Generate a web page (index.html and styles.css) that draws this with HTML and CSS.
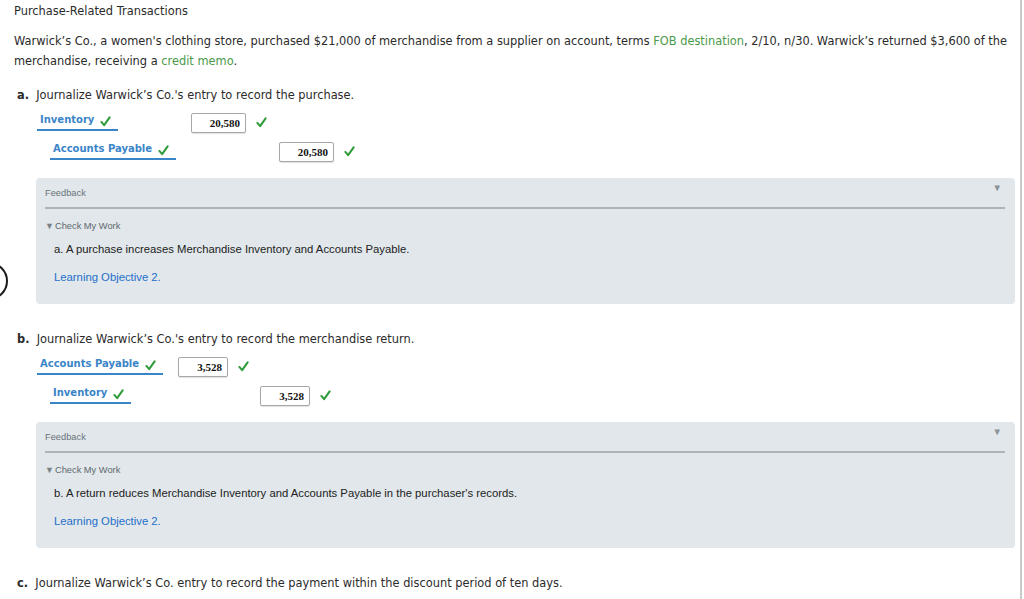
FILE: index.html
```html
<!DOCTYPE html>
<html>
<head>
<meta charset="utf-8">
<link rel="stylesheet" href="styles.css">
</head>
<body>
<div class="frame">
  <div class="ring"></div>
  <div class="page">
    <div class="title">Purchase-Related Transactions</div>
    <p class="intro">Warwick’s Co., a women's clothing store, purchased $21,000 of merchandise from a supplier on account, terms <span class="term">FOB destination</span>, 2/10, n/30. Warwick’s returned $3,600 of the merchandise, receiving a <span class="term">credit memo</span>.</p>

    <div class="question"><b>a.</b>&nbsp; Journalize Warwick’s Co.'s entry to record the purchase.</div>
    <div class="entry entry-a">
      <div class="row">
        <div class="label-cell"><span class="acct">Inventory<svg class="chk" viewBox="0 0 12 12"><path d="M1.5 6.5 L4.5 10 L10.5 1.5" /></svg></span></div>
        <div class="debit-cell"><span class="amt">20,580</span><svg class="chk" viewBox="0 0 12 12"><path d="M1.5 6.5 L4.5 10 L10.5 1.5" /></svg></div>
        <div class="credit-cell"></div>
      </div>
      <div class="row">
        <div class="label-cell indent"><span class="acct">Accounts Payable<svg class="chk" viewBox="0 0 12 12"><path d="M1.5 6.5 L4.5 10 L10.5 1.5" /></svg></span></div>
        <div class="debit-cell"></div>
        <div class="credit-cell"><span class="amt">20,580</span><svg class="chk" viewBox="0 0 12 12"><path d="M1.5 6.5 L4.5 10 L10.5 1.5" /></svg></div>
      </div>
    </div>

    <div class="feedback">
      <div class="fb-head"><span>Feedback</span><span class="fb-arrow">▼</span></div>
      <div class="fb-body">
        <div class="cmw"><span class="tri">▼</span>Check My Work</div>
        <div class="fb-text">a. A purchase increases Merchandise Inventory and Accounts Payable.</div>
        <div class="fb-link">Learning Objective 2.</div>
      </div>
    </div>

    <div class="question q-next"><b>b.</b>&nbsp; Journalize Warwick’s Co.'s entry to record the merchandise return.</div>
    <div class="entry entry-b">
      <div class="row">
        <div class="label-cell"><span class="acct">Accounts Payable<svg class="chk" viewBox="0 0 12 12"><path d="M1.5 6.5 L4.5 10 L10.5 1.5" /></svg></span></div>
        <div class="debit-cell"><span class="amt">3,528</span><svg class="chk" viewBox="0 0 12 12"><path d="M1.5 6.5 L4.5 10 L10.5 1.5" /></svg></div>
        <div class="credit-cell"></div>
      </div>
      <div class="row">
        <div class="label-cell indent"><span class="acct">Inventory<svg class="chk" viewBox="0 0 12 12"><path d="M1.5 6.5 L4.5 10 L10.5 1.5" /></svg></span></div>
        <div class="debit-cell"></div>
        <div class="credit-cell"><span class="amt">3,528</span><svg class="chk" viewBox="0 0 12 12"><path d="M1.5 6.5 L4.5 10 L10.5 1.5" /></svg></div>
      </div>
    </div>

    <div class="feedback">
      <div class="fb-head"><span>Feedback</span><span class="fb-arrow">▼</span></div>
      <div class="fb-body">
        <div class="cmw"><span class="tri">▼</span>Check My Work</div>
        <div class="fb-text">b. A return reduces Merchandise Inventory and Accounts Payable in the purchaser's records.</div>
        <div class="fb-link">Learning Objective 2.</div>
      </div>
    </div>

    <div class="question q-next"><b>c.</b>&nbsp; Journalize Warwick’s Co. entry to record the payment within the discount period of ten days.</div>
  </div>
</div>
</body>
</html>
```

FILE: styles.css
```css
html, body {
  margin: 0;
  padding: 0;
  background: #ffffff;
}
body {
  font-family: "DejaVu Sans", Verdana, sans-serif;
  font-size: 11.4px;
  color: #2b2b2b;
  overflow: hidden;
}
.frame {
  position: relative;
  width: 1020px;
  height: 599px;
  border-right: 2px solid #c9c9c9;
  overflow: hidden;
}
.ring {
  position: absolute;
  left: -30px;
  top: 262px;
  width: 34px;
  height: 34px;
  border: 2px solid #1a1a1a;
  border-radius: 50%;
}
.page {
  padding-left: 14px;
  padding-top: 1px;
}
.title {
  line-height: 20px;
  height: 20px;
}
.intro {
  margin: 10px 0 0 0;
  line-height: 20px;
  padding-right: 6px;
}
.term {
  color: #4a9a4a;
}
.question {
  margin-top: 14px;
  line-height: 20px;
  padding-left: 3px;
}
.question b {
  font-weight: bold;
}
.q-next {
  margin-top: 25px;
}
.entry {
  margin-top: 3px;
  padding-left: 23px;
}
.row {
  display: flex;
  align-items: center;
  height: 29px;
}
.label-cell {
  flex: none;
  margin-bottom: 2px;
}
.indent {
  padding-left: 13px;
}
.entry-a .label-cell { width: 154px; }
.entry-a .label-cell.indent { width: 141px; }
.entry-a .debit-cell { width: 88px; }
.entry-b .label-cell { width: 141px; }
.entry-b .label-cell.indent { width: 128px; }
.entry-b .debit-cell { width: 82px; }
.debit-cell, .credit-cell {
  flex: none;
  display: flex;
  align-items: center;
  height: 20px;
}
.acct {
  display: inline-flex;
  align-items: center;
  font-weight: bold;
  font-size: 10px;
  color: #3a84c8;
  padding: 0 7px 2px 3px;
  border-bottom: 2px solid #3a84c8;
  line-height: 14px;
}
.acct .chk {
  margin-left: 6px;
  margin-top: 2px;
}
.amt {
  box-sizing: border-box;
  display: inline-block;
  width: 55px;
  height: 20px;
  line-height: 18px;
  border: 1px solid #a8a8a8;
  border-radius: 2px;
  box-shadow: 0 1px 1px rgba(0,0,0,0.12);
  text-align: right;
  padding-right: 5px;
  font-family: "Liberation Serif", "Times New Roman", serif;
  font-weight: bold;
  font-size: 11px;
  color: #111;
  background: #fff;
}
.entry-b .amt {
  width: 50px;
}
.debit-cell .chk, .credit-cell .chk {
  margin-left: 10px;
}
.chk {
  width: 11px;
  height: 11px;
  flex: none;
}
.chk path {
  fill: none;
  stroke: #2e9b3a;
  stroke-width: 2.2;
  stroke-linecap: round;
  stroke-linejoin: round;
}
.feedback {
  margin-top: 12px;
  margin-left: 22px;
  width: 979px;
  height: 126px;
  box-sizing: border-box;
  background: #e1e7ea;
  border-radius: 4px;
  padding: 0 10px 0 9px;
  font-family: "Liberation Sans", Arial, sans-serif;
}
.fb-head {
  display: flex;
  justify-content: space-between;
  align-items: center;
  height: 29px;
  border-bottom: 2px solid #adb4b8;
  font-size: 9.3px;
  color: #6a747b;
}
.fb-arrow {
  font-size: 9.5px;
  color: #8b9298;
  margin-right: 3px;
  margin-top: -11px;
}
.fb-body {
  padding-top: 10px;
}
.cmw {
  font-size: 9.3px;
  color: #5f686e;
  line-height: 14px;
}
.tri {
  font-size: 9px;
  color: #7a8288;
  margin-right: 1px;
}
.fb-text {
  margin-top: 9px;
  padding-left: 9px;
  font-size: 11.3px;
  color: #222;
  line-height: 14px;
}
.fb-link {
  margin-top: 14px;
  padding-left: 9px;
  font-size: 11.3px;
  color: #1f6fc9;
  line-height: 14px;
}
```
